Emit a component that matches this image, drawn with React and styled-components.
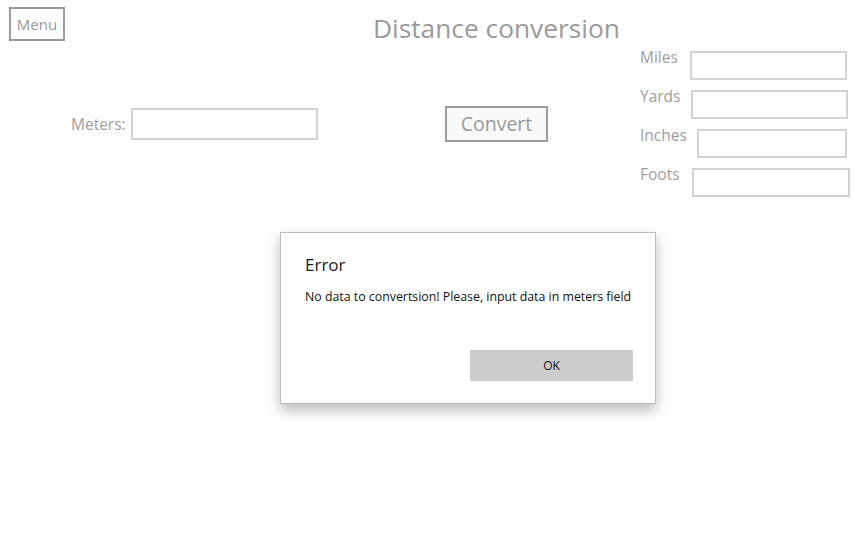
import React from 'react';
import styled, { createGlobalStyle } from 'styled-components';

const GlobalStyle = createGlobalStyle`
  html, body {
    margin: 0;
    padding: 0;
    background: #ffffff;
    font-family: "Open Sans", "Noto Sans", sans-serif;
  }
`;

const Page = styled.div`
  position: relative;
  width: 868px;
  height: 540px;
  background: #ffffff;
  overflow: hidden;
`;

const Header = styled.div`
  display: flex;
  align-items: flex-start;
  height: 45px;
`;

const MenuButton = styled.button`
  margin: 7px 0 0 9px;
  width: 56px;
  height: 34px;
  padding: 0;
  border: 2px solid #9c9c9c;
  background: #ffffff;
  color: #9a9a9a;
  font-family: inherit;
  font-size: 15px;
`;

const Title = styled.h1`
  margin: 11px 0 0 308px;
  font-size: 26.3px;
  font-weight: 400;
  line-height: 34px;
  color: #9a9a9a;
  white-space: nowrap;
`;

const Panel = styled.div`
  display: grid;
  grid-template-columns: 380px 195px 215px;
  align-items: center;
  margin-left: 65px;
  width: 790px;
  height: 158px;
  background: #fdfdfd;
`;

const MetersGroup = styled.div`
  display: flex;
  align-items: center;
  padding-left: 6px;
`;

const Label = styled.span`
  color: #a0a0a0;
  font-size: 15.5px;
  line-height: 20px;
  white-space: nowrap;
`;

const Field = styled.input`
  box-sizing: border-box;
  width: ${p => p.$width}px;
  height: ${p => p.$height}px;
  margin-left: ${p => p.$gap}px;
  border: 2px solid #d2d2d2;
  background: #ffffff;
  outline: none;
`;

const ConvertButton = styled.button`
  justify-self: start;
  width: 103px;
  height: 36px;
  padding: 0 0 2px;
  border: 2px solid #9c9c9c;
  background: #f9f9f9;
  color: #9a9a9a;
  font-family: inherit;
  font-size: 19.5px;
`;

const Outputs = styled.div`
  display: flex;
  flex-direction: column;
  gap: 10px;
  margin-top: -1px;
`;

const OutputRow = styled.div`
  display: flex;
  align-items: flex-start;
  ${Label} {
    margin-top: -4px;
  }
`;

const Dialog = styled.div`
  position: absolute;
  left: 280px;
  top: 232px;
  box-sizing: border-box;
  width: 376px;
  height: 172px;
  padding: 20px 22px 22px 24px;
  display: flex;
  flex-direction: column;
  background: #ffffff;
  border: 1px solid #bdbdbd;
  box-shadow: 0 6px 14px rgba(0, 0, 0, 0.28);
`;

const DialogTitle = styled.div`
  font-size: 17px;
  line-height: 24px;
  color: #1a1a1a;
`;

const DialogText = styled.div`
  margin-top: 12px;
  font-size: 12.35px;
  line-height: 16px;
  color: #111111;
  white-space: nowrap;
`;

const DialogFooter = styled.div`
  margin-top: auto;
  display: flex;
  justify-content: flex-end;
`;

const OkButton = styled.button`
  width: 163px;
  height: 31px;
  border: none;
  background: #cccccc;
  color: #111111;
  font-family: inherit;
  font-size: 12px;
`;

const outputs = [
  { name: 'Miles', gap: 12, width: 157 },
  { name: 'Yards', gap: 11, width: 157 },
  { name: 'Inches', gap: 10, width: 150 },
  { name: 'Foots', gap: 12, width: 158 },
];

const App = () => (
  <Page>
    <GlobalStyle />
    <Header>
      <MenuButton>Menu</MenuButton>
      <Title>Distance conversion</Title>
    </Header>
    <Panel>
      <MetersGroup>
        <Label>Meters:</Label>
        <Field $width={187} $height={32} $gap={5} />
      </MetersGroup>
      <ConvertButton>Convert</ConvertButton>
      <Outputs>
        {outputs.map(o => (
          <OutputRow key={o.name}>
            <Label>{o.name}</Label>
            <Field $width={o.width} $height={29} $gap={o.gap} />
          </OutputRow>
        ))}
      </Outputs>
    </Panel>
    <Dialog>
      <DialogTitle>Error</DialogTitle>
      <DialogText>No data to convertsion! Please, input data in meters field</DialogText>
      <DialogFooter>
        <OkButton>OK</OkButton>
      </DialogFooter>
    </Dialog>
  </Page>
);

export default App;
